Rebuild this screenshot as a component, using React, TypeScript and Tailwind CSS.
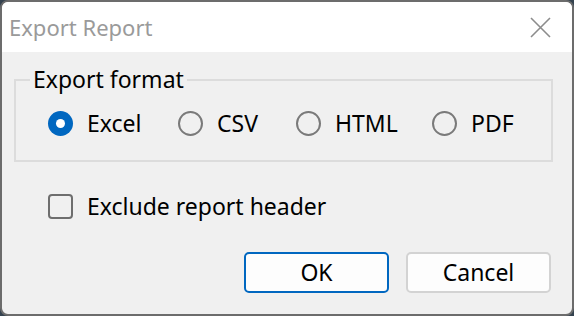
import React from "react";

const font = { fontFamily: '"Noto Sans", "Liberation Sans", sans-serif' };

function Radio({ checked }: { checked?: boolean }) {
  if (checked) {
    return (
      <span className="w-[25px] h-[25px] rounded-full bg-[#0067c0] flex items-center justify-center shrink-0">
        <span className="w-[9px] h-[9px] rounded-full bg-white" />
      </span>
    );
  }
  return <span className="w-[25px] h-[25px] rounded-full border-2 border-[#7a7a7a] bg-[#f0f0f0] shrink-0" />;
}

export default function App() {
  return (
    <div className="w-[574px] h-[316px] bg-[#34424f]" style={font}>
      <div className="w-full h-full flex flex-col rounded-[8px] border-2 border-[#6c6c6c] overflow-hidden bg-[#f0f0f0]">
        <div className="h-[50px] bg-white flex items-center justify-between pl-[7px] pr-[21px] shrink-0">
          <span className="text-[22px] text-[#9a9a9a] leading-none">Export Report</span>
          <svg width="21" height="21" viewBox="0 0 21 21" className="block">
            <path d="M1 1 L20 20 M20 1 L1 20" stroke="#8c8c8c" strokeWidth="1.6" fill="none" />
          </svg>
        </div>
        <div className="flex-1 flex flex-col text-black text-[23px] leading-none">
          <fieldset className="ml-[12px] mr-[19px] mt-[16px] border-2 border-[#dcdcdc] h-[94px]">
            <legend className="ml-[14px] px-[3px]">Export format</legend>
            <div className="flex items-center mt-[20px] pl-[32px]">
              <div className="w-[130px] flex items-center gap-[14px]"><Radio checked /><span>Excel</span></div>
              <div className="w-[118px] flex items-center gap-[14px]"><Radio /><span>CSV</span></div>
              <div className="w-[136px] flex items-center gap-[14px]"><Radio /><span>HTML</span></div>
              <div className="flex items-center gap-[14px]"><Radio /><span>PDF</span></div>
            </div>
          </fieldset>
          <div className="flex items-center gap-[14px] ml-[46px] mt-[32px]">
            <span className="w-[25px] h-[25px] rounded-[4px] border-2 border-[#6e6e6e] shrink-0" />
            <span>Exclude report header</span>
          </div>
          <div className="flex justify-end gap-[17px] mr-[21px] mt-[33px]">
            <button className="w-[145px] h-[41px] rounded-[5px] border-2 border-[#0067c0] bg-[#fdfdfd] flex items-center justify-center">OK</button>
            <button className="w-[145px] h-[41px] rounded-[5px] border-2 border-[#d3d3d3] bg-[#fdfdfd] flex items-center justify-center">Cancel</button>
          </div>
        </div>
      </div>
    </div>
  );
}
